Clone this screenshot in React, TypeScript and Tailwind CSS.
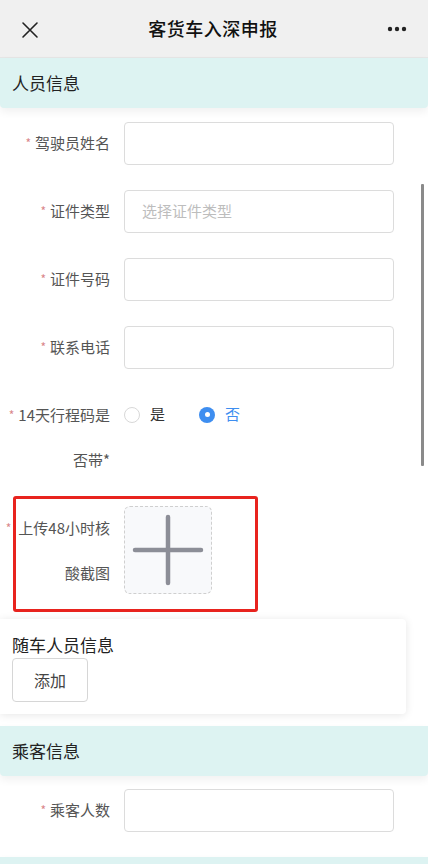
import React from "react";

const font = { fontFamily: '"Noto Sans CJK SC", "Noto Sans", sans-serif' };

function Req() {
  return <span className="text-[12px] text-[#d9868a] mr-[4px] align-[1px]">*</span>;
}

function InputRow({ label, placeholder }: { label: string; placeholder?: string }) {
  return (
    <div className="flex items-center h-[43px] mb-[25px]">
      <div className="w-[110px] text-right text-[15px] text-[#555]">
        <Req />
        {label}
      </div>
      <div className="ml-[14px] w-[270px] h-[43px] border border-[#dcdcdc] rounded-[4px] bg-white flex items-center pl-[17px] text-[15px] text-[#bdbdbd]">
        {placeholder}
      </div>
    </div>
  );
}

function SectionHead({ title }: { title: string }) {
  return (
    <div className="h-[50px] bg-[#ddf3f2] flex items-center pl-[12px] text-[17px] text-[#222] shadow-[0_4px_8px_rgba(0,0,0,0.06)] rounded-b-[4px]">
      {title}
    </div>
  );
}

export default function App() {
  return (
    <div className="relative w-[428px] h-[864px] overflow-hidden bg-white" style={font}>
      {/* nav bar */}
      <div className="h-[58px] bg-[#f0f0f0] flex items-center justify-between px-[21px] border-b border-[#e6e6e6]">
        <svg width="18" height="18" viewBox="0 0 18 18" className="mt-[2px]">
          <path d="M2 2 L16 16 M16 2 L2 16" stroke="#222" strokeWidth="1.6" strokeLinecap="round" />
        </svg>
        <div className="text-[18px] font-medium text-[#111] tracking-[0.5px]">客货车入深申报</div>
        <svg width="20" height="6" viewBox="0 0 20 6">
          <circle cx="3" cy="3" r="2.2" fill="#222" />
          <circle cx="10" cy="3" r="2.2" fill="#222" />
          <circle cx="17" cy="3" r="2.2" fill="#222" />
        </svg>
      </div>

      <SectionHead title="人员信息" />

      <div className="pt-[14px]">
        <InputRow label="驾驶员姓名" />
        <InputRow label="证件类型" placeholder="选择证件类型" />
        <InputRow label="证件号码" />
        <InputRow label="联系电话" />

        {/* radio row */}
        <div className="flex items-start mt-[-2px]">
          <div className="w-[110px] text-right text-[15px] text-[#555] leading-[45px]">
            <div>
              <Req />
              14天行程码是
            </div>
            <div>否带*</div>
          </div>
          <div className="ml-[14px] h-[45px] flex items-center text-[15px]">
            <span className="w-[16px] h-[16px] rounded-full border border-[#d8d8d8] bg-white" />
            <span className="ml-[10px] text-[#333]">是</span>
            <span className="ml-[34px] w-[16px] h-[16px] rounded-full bg-[#3e8ef0] flex items-center justify-center">
              <span className="w-[5px] h-[5px] rounded-full bg-white" />
            </span>
            <span className="ml-[10px] text-[#3e8ef0]">否</span>
          </div>
        </div>

        {/* upload row */}
        <div className="flex items-start mt-[23px]">
          <div className="w-[110px] text-right text-[15px] text-[#555] leading-[45px]">
            <div className="whitespace-nowrap">
              <span className="text-[12px] text-[#d9868a] mr-[7px] align-[1px]">*</span>
              上传48小时核
            </div>
            <div>酸截图</div>
          </div>
          <div className="ml-[14px] mt-[1px] w-[88px] h-[88px] border border-dashed border-[#cfcfcf] rounded-[6px] bg-[#f8f9fb] flex items-center justify-center">
            <svg width="72" height="72" viewBox="0 0 72 72">
              <path d="M36 3 V69 M3 36 H69" stroke="#8c8e97" strokeWidth="4.5" strokeLinecap="round" />
            </svg>
          </div>
        </div>

        {/* companions card */}
        <div className="mt-[24px] w-[406px] rounded-r-[4px] bg-white shadow-[0_1px_8px_rgba(0,0,0,0.1)] px-[12px] pt-[14px] pb-[12px]">
          <div className="text-[17px] text-[#222] leading-[24px]">随车人员信息</div>
          <button className="mt-[1px] w-[76px] h-[44px] border border-[#d6d6d6] rounded-[4px] bg-white text-[16px] text-[#444]">
            添加
          </button>
        </div>

        <div className="mt-[12px]">
          <SectionHead title="乘客信息" />
        </div>
        <div className="pt-[13px]">
          <InputRow label="乘客人数" />
        </div>
        <SectionHead title="" />
      </div>

      {/* annotation box */}
      <div className="absolute left-[13px] top-[496px] w-[245px] h-[116px] border-[3px] border-[#e8231e] rounded-[3px]" />

      {/* scrollbar */}
      <div className="absolute left-[421px] top-[184px] w-[3px] h-[282px] bg-[#8a8a8a] rounded-[1px]" />
    </div>
  );
}
